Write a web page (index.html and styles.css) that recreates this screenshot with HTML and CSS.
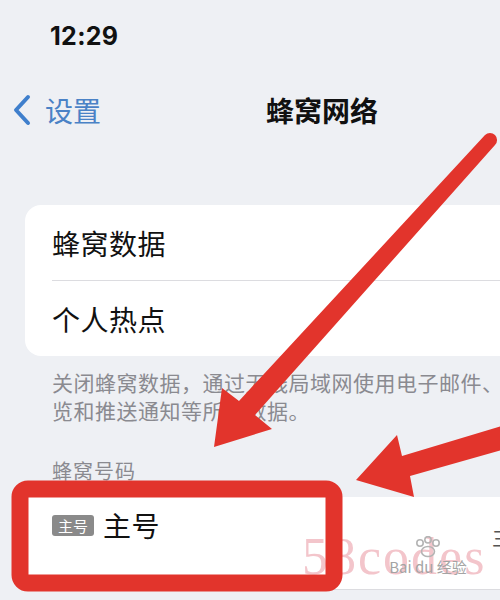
FILE: index.html
```html
<!DOCTYPE html>
<html>
<head>
<meta charset="UTF-8">
<title>蜂窝网络</title>
<link rel="stylesheet" href="styles.css">
</head>
<body>
<div class="screen">

	<div class="status">
		<span class="time">12:29</span>
	</div>

	<div class="navbar">
		<div class="back">
			<svg class="chevron" width="22" height="32" viewBox="0 0 22 32">
				<path d="M17 3 L5 16 L17 29" fill="none" stroke="#3f7fcc" stroke-width="4" stroke-linecap="round" stroke-linejoin="round"/>
			</svg>
			<span>设置</span>
		</div>
		<div class="title">蜂窝网络</div>
	</div>

	<div class="group">
		<div class="row">蜂窝数据</div>
		<div class="row">个人热点</div>
	</div>

	<p class="note">关闭蜂窝数据，通过无线局域网使用电子邮件、浏<br>览和推送通知等所有数据。</p>

	<div class="section-head">蜂窝号码</div>

	<div class="group group-sim">
		<div class="row sim-row">
			<span class="badge">主号</span>
			<span class="sim-name">主号</span>
			<span class="sim-value">主号</span>
		</div>
	</div>

	<!-- watermarks -->
	<div class="wm-58">58codes</div>
	<div class="wm-baidu">
		<svg width="28" height="22" viewBox="0 0 28 22">
			<g fill="none" stroke="#b4b4b4" stroke-width="1.6">
				<circle cx="6" cy="7" r="3.2"/>
				<circle cx="14" cy="3.8" r="3.2"/>
				<circle cx="22" cy="7" r="3.2"/>
				<ellipse cx="14" cy="15.5" rx="6.5" ry="5"/>
			</g>
		</svg>
		<span>Bai du 经验</span>
	</div>

	<!-- red markings drawn on top -->
	<svg class="marks" width="500" height="600" viewBox="0 0 500 600">
		<g fill="#e2342c">
			<path d="M214 447 L222 388 L239 401 L485 135 A7 7 0 0 1 495 145 L255 415 L272 429 Z"/>
			<path d="M356 480 L397 435 L402 456 L502 426 L502 450 L410 476 L414 497 Z"/>
		</g>
		<rect x="20" y="489" width="314" height="94" rx="8" fill="none" stroke="#e2342c" stroke-width="17"/>
	</svg>

</div>
</body>
</html>
```

FILE: styles.css
```css
body {
	margin: 0px;
	padding: 0px;
	background: #eef0f4;
	font-family: "Noto Sans CJK SC", "Noto Sans", sans-serif;
	color: #111;
}

.screen {
	position: relative;
	width: 500px;
	height: 600px;
	overflow: hidden;
}

.status {
	height: 72px;
	padding-left: 50px;
	display: flex;
	align-items: center;
}

.time {
	font-family: Inter, "Liberation Sans", sans-serif;
	font-weight: 700;
	font-size: 25px;
	letter-spacing: 0.3px;
}

.navbar {
	height: 76px;
	display: flex;
	align-items: center;
}

.back {
	display: flex;
	align-items: center;
	padding-left: 11px;
	color: #4a82c6;
	font-size: 28px;
}

.back span {
	margin-left: 12px;
}

.title {
	margin-left: 165px;
	font-size: 28px;
	font-weight: 700;
}

.group {
	margin: 57px -60px 0px 25px;
	background: #fff;
	border-radius: 16px;
	padding-left: 27px;
}

.row {
	height: 75px;
	display: flex;
	align-items: center;
	font-size: 28px;
	letter-spacing: 0.5px;
}

.row + .row {
	border-top: 1px solid #dcdce0;
}

.note {
	margin: 12px 0px 0px 52px;
	font-size: 21px;
	line-height: 28px;
	letter-spacing: 0.5px;
	color: #8a8a90;
	white-space: nowrap;
}

.section-head {
	margin: 33px 0px 0px 52px;
	font-size: 20px;
	line-height: 28px;
	letter-spacing: 1px;
	color: #8a8a90;
}

.group-sim {
	margin-top: 12px;
	border-radius: 0px;
	border-bottom: 1px solid #dcdce0;
}

.sim-row {
	height: 92px;
	align-items: flex-start;
	padding-top: 10px;
	box-sizing: border-box;
	padding-right: 23px;
}

.badge {
	margin-top: 8px;
	background: #8a8a8a;
	color: #fff;
	font-size: 15px;
	line-height: 21px;
	padding: 0px 6px;
	border-radius: 3px;
	letter-spacing: 0px;
}

.sim-name {
	margin-left: 9px;
	font-size: 28px;
	line-height: 36px;
}

.sim-value {
	margin-left: auto;
	font-size: 22px;
	line-height: 36px;
	margin-top: 10px;
	color: #555;
}

.wm-58 {
	position: absolute;
	left: 302px;
	top: 527px;
	font-family: "Liberation Serif", serif;
	font-size: 52px;
	letter-spacing: 2px;
	color: rgba(226, 110, 125, 0.4);
}

.wm-baidu {
	position: absolute;
	left: 380px;
	top: 536px;
	width: 96px;
	display: flex;
	flex-direction: column;
	align-items: center;
	color: #a4a4a4;
	font-size: 15px;
	line-height: 18px;
}

.marks {
	position: absolute;
	left: 0px;
	top: 0px;
}
```
